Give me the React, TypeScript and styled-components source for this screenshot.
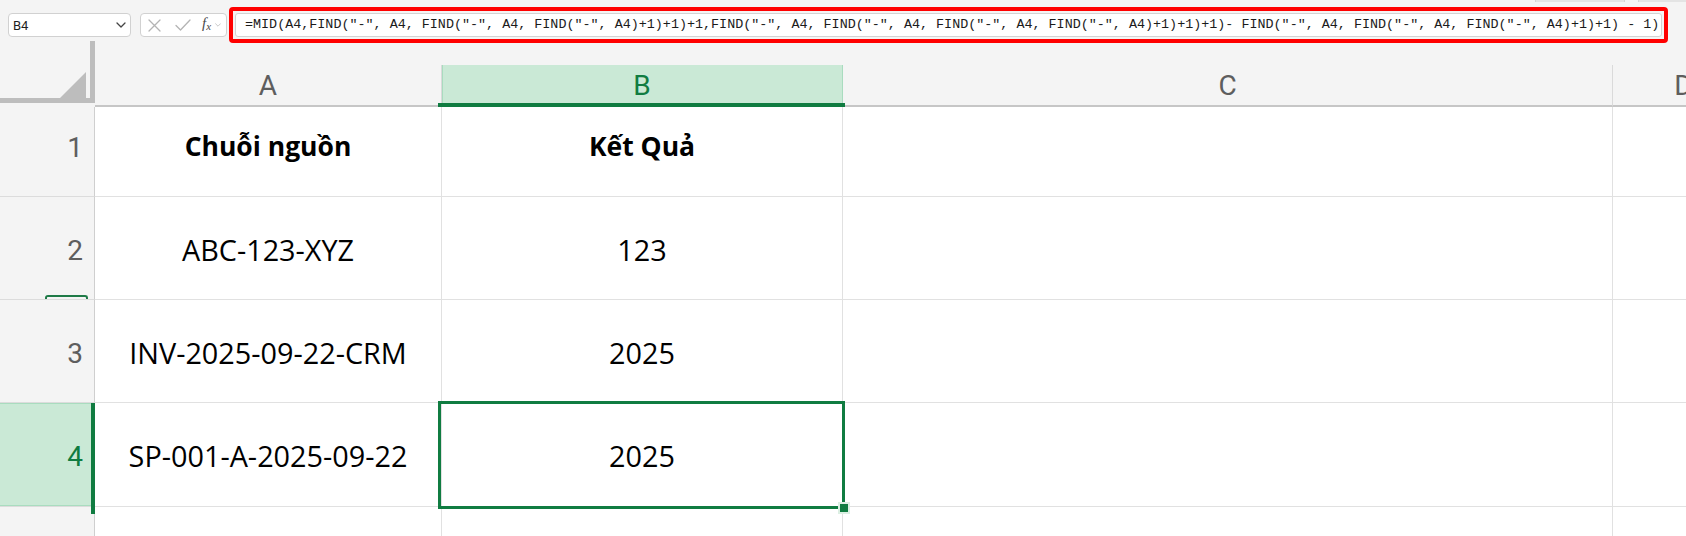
import React from "react";
import styled, { createGlobalStyle, css } from "styled-components";

const GREEN = "#107c41";
const SEL_FILL = "#cae9d6";
const SEL_EDGE = "#a9dcbf";

const GlobalStyle = createGlobalStyle`
  html, body { margin: 0; padding: 0; background: #f4f4f4; }
  body { font-family: "Open Sans", "Noto Sans", sans-serif; }
  *, *::before, *::after { box-sizing: border-box; }
`;

const Page = styled.div`
  width: 1686px;
  height: 536px;
  overflow: hidden;
  background: #f4f4f4;
  display: flex;
  flex-direction: column;
`;

const TopStrip = styled.div`
  flex: none;
  height: 2px;
  display: flex;
  gap: 13px;
  padding-left: 1535px;
`;

const GhostButton = styled.div<{ $w: number }>`
  flex: none;
  width: ${(p) => p.$w}px;
  height: 2px;
  background: #e4e4e4;
  border-left: 1px solid #d4d4d4;
  border-right: 1px solid #d4d4d4;
`;

const FormulaRow = styled.div`
  flex: none;
  position: relative;
  z-index: 1;
  height: 41px;
  margin-bottom: -2px;
  padding: 5px 0 0 8px;
  display: flex;
  align-items: flex-start;
`;

const Box = styled.div`
  height: 24px;
  margin-top: 6px;
  background: #fff;
  border: 1px solid #d1d1d1;
  border-radius: 4px;
  display: flex;
  align-items: center;
`;

const NameBox = styled(Box)`
  width: 123px;
  justify-content: space-between;
  padding: 0 4px;
  font: 13px Roboto, "Liberation Sans", sans-serif;
  color: #1f1f1f;
`;

const FxBox = styled(Box)`
  width: 87px;
  margin-left: 9px;
  padding-left: 7px;
`;

const IconSlot = styled.span<{ $gap: number }>`
  display: inline-flex;
  margin-left: ${(p) => p.$gap}px;
`;

const FxLabel = styled.span`
  font-family: "Liberation Serif", serif;
  font-style: italic;
  font-size: 15px;
  color: #4a4a4a;
  line-height: 1;
  display: inline-flex;
  align-items: flex-start;
  margin-left: 11px;
  margin-top: -2px;
  & > sub {
    font-size: 11px;
    font-style: italic;
    line-height: 1;
    margin-top: 5px;
    vertical-align: baseline;
  }
`;

const Highlight = styled.div`
  flex: none;
  margin-left: 2px;
  width: 1439px;
  height: 36px;
  border: 4px solid #ff0000;
  border-radius: 4px;
  padding: 2px;
`;

const FormulaInput = styled.div`
  height: 24px;
  background: #fff;
  border: 1px solid #d3d3d3;
  border-radius: 3px;
  padding-left: 9px;
  font-family: "Liberation Mono", "DejaVu Sans Mono", monospace;
  font-size: 13.4px;
  line-height: 22px;
  color: #1b1b1b;
  white-space: pre;
  overflow: hidden;
`;

const Sheet = styled.div`
  flex: 1;
  display: grid;
  grid-template-columns: 95px 347px 401px 770px 142px;
  grid-template-rows: 66px 90px 103px 103px 104px 103px;
`;

const Corner = styled.div`
  align-self: start;
  height: 62px;
  border-right: 5px solid #bdbdbd;
  border-bottom: 5px solid #bdbdbd;
  display: flex;
  align-items: flex-end;
  justify-content: flex-end;
  padding-right: 4px;
`;

const CornerTriangle = styled.div`
  width: 0;
  height: 0;
  border-left: 26px solid transparent;
  border-bottom: 26px solid #bdbdbd;
`;

const ColHeader = styled.div<{ $selected?: boolean }>`
  align-self: end;
  height: 42px;
  position: relative;
  display: flex;
  align-items: center;
  justify-content: center;
  font-family: Roboto, "Liberation Sans", sans-serif;
  font-size: 28px;
  color: #5e5e5e;
  border-right: 1px solid #dadada;
  border-bottom: 2px solid #c6c6c6;
  ${(p) =>
    p.$selected &&
    css`
      background: ${SEL_FILL};
      color: ${GREEN};
      border-right-color: ${SEL_EDGE};
      box-shadow: inset 1px 0 ${SEL_EDGE};
      border-bottom-color: transparent;
      &::after {
        content: "";
        position: absolute;
        z-index: 2;
        left: -4px;
        right: -3px;
        bottom: -2px;
        height: 4px;
        background: ${GREEN};
      }
    `}
`;

const pad = (v: number) =>
  v >= 0 ? `padding-top: ${v}px;` : `padding-bottom: ${-v}px;`;

const RowHeader = styled.div<{ $selected?: boolean; $shift: number }>`
  position: relative;
  display: flex;
  align-items: center;
  justify-content: flex-end;
  padding-right: 11px;
  background: #f4f4f4;
  border-right: 1px solid #cfcfcf;
  border-bottom: 1px solid #dcdcdc;
  font-family: Roboto, "Liberation Sans", sans-serif;
  font-size: 28px;
  color: #5e5e5e;
  ${(p) => pad(2 * (p.$shift + 0.4))}
  ${(p) =>
    p.$selected &&
    css`
      background: ${SEL_FILL};
      color: ${GREEN};
      box-shadow: inset 0 1px ${SEL_EDGE}, inset 0 -1px ${SEL_EDGE};
      &::after {
        content: "";
        position: absolute;
        z-index: 2;
        right: -1px;
        top: 0;
        bottom: -8px;
        width: 4px;
        background: ${GREEN};
      }
    `}
`;

const RowMark = styled.span`
  position: absolute;
  left: 45px;
  width: 43px;
  bottom: 0;
  height: 4px;
  border: 2px solid #1f7a47;
  border-bottom: none;
  border-radius: 3px 3px 0 0;
`;

const Cell = styled.div<{ $bold?: boolean; $shift: number }>`
  position: relative;
  display: flex;
  align-items: center;
  justify-content: center;
  background: #fff;
  border-right: 1px solid #e1e1e1;
  border-bottom: 1px solid #e1e1e1;
  font-family: "Open Sans", "Noto Sans", sans-serif;
  font-size: ${(p) => (p.$bold ? 26.5 : 28.8)}px;
  font-weight: ${(p) => (p.$bold ? 700 : 400)};
  color: #000;
  white-space: nowrap;
  ${(p) => pad(2 * (p.$shift - 0.9))}
`;

const SelectionFrame = styled.div`
  position: absolute;
  z-index: 3;
  left: -4px;
  top: -2px;
  right: -3px;
  bottom: -3px;
  border: 3px solid ${GREEN};
  pointer-events: none;
`;

const FillHandle = styled.span`
  position: absolute;
  right: -8px;
  bottom: -8px;
  width: 12px;
  height: 12px;
  background: ${GREEN};
  border: 2px solid #dcefe3;
`;

const ChevronIcon = ({ color = "#444", w = 10, h = 6 }: { color?: string; w?: number; h?: number }) => (
  <svg width={w} height={h} viewBox="0 0 10 6" fill="none">
    <path d="M1 1 L5 5 L9 1" stroke={color} strokeWidth="1.3" strokeLinecap="round" strokeLinejoin="round" />
  </svg>
);

const CancelIcon = () => (
  <svg width="13" height="13" viewBox="0 0 13 13" fill="none">
    <path d="M1 1 L12 12 M12 1 L1 12" stroke="#b4b4b4" strokeWidth="1.3" strokeLinecap="round" />
  </svg>
);

const EnterIcon = () => (
  <svg width="16" height="12" viewBox="0 0 16 12" fill="none">
    <path d="M1 6.5 L5.5 11 L15 1" stroke="#b4b4b4" strokeWidth="1.3" strokeLinecap="round" strokeLinejoin="round" />
  </svg>
);

const FORMULA =
  '=MID(A4,FIND("-", A4, FIND("-", A4, FIND("-", A4)+1)+1)+1,FIND("-", A4, FIND("-", A4, FIND("-", A4, FIND("-", A4)+1)+1)+1)- FIND("-", A4, FIND("-", A4, FIND("-", A4)+1)+1) - 1)';

type Row = {
  n: number;
  label: string;
  a: string;
  b: string;
  bold?: boolean;
  shift: number;
  mark?: boolean;
  selected?: boolean;
};

const ROWS: Row[] = [
  { n: 1, label: "1", a: "Chuỗi nguồn", b: "Kết Quả", bold: true, shift: -4.5 },
  { n: 2, label: "2", a: "ABC-123-XYZ", b: "123", shift: 2, mark: true },
  { n: 3, label: "3", a: "INV-2025-09-22-CRM", b: "2025", shift: 2 },
  { n: 4, label: "4", a: "SP-001-A-2025-09-22", b: "2025", shift: 2, selected: true },
  { n: 5, label: "", a: "", b: "", shift: 2 },
];

const COLS = ["A", "B", "C", "D"];

export default function App() {
  return (
    <>
      <GlobalStyle />
      <Page>
        <TopStrip>
          <GhostButton $w={90} />
          <GhostButton $w={60} />
        </TopStrip>
        <FormulaRow>
          <NameBox>
            <span>B4</span>
            <ChevronIcon />
          </NameBox>
          <FxBox>
            <IconSlot $gap={0}>
              <CancelIcon />
            </IconSlot>
            <IconSlot $gap={14}>
              <EnterIcon />
            </IconSlot>
            <FxLabel>
              f<sub>x</sub>
            </FxLabel>
            <IconSlot $gap={4}>
              <ChevronIcon color="#b8b8b8" w={6} h={4} />
            </IconSlot>
          </FxBox>
          <Highlight>
            <FormulaInput>{FORMULA}</FormulaInput>
          </Highlight>
        </FormulaRow>
        <Sheet>
          <Corner>
            <CornerTriangle />
          </Corner>
          {COLS.map((c) => (
            <ColHeader key={c} $selected={c === "B"}>
              {c}
            </ColHeader>
          ))}
          {ROWS.map((r) => (
            <React.Fragment key={r.n}>
              <RowHeader $selected={r.selected} $shift={r.shift}>
                {r.label}
                {r.mark && <RowMark />}
              </RowHeader>
              <Cell $bold={r.bold} $shift={r.shift}>
                {r.a}
              </Cell>
              <Cell $bold={r.bold} $shift={r.shift}>
                {r.b}
                {r.selected && (
                  <SelectionFrame>
                    <FillHandle />
                  </SelectionFrame>
                )}
              </Cell>
              <Cell $shift={r.shift} />
              <Cell $shift={r.shift} />
            </React.Fragment>
          ))}
        </Sheet>
      </Page>
    </>
  );
}
